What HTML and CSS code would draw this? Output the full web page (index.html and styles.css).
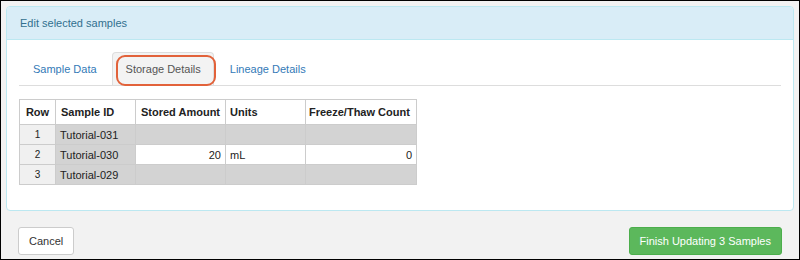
FILE: index.html
```html
<!DOCTYPE html>
<html lang="en">
<head>
    <meta charset="UTF-8">
    <title>Edit selected samples</title>
    <link rel="stylesheet" href="styles.css">
</head>
<body>
    <div class="frame">
        <div class="panel">
            <div class="panel-heading">Edit selected samples</div>
            <div class="panel-body">
                <ul class="tabs">
                    <li class="tab"><a href="#">Sample Data</a></li>
                    <li class="tab active"><a href="#">Storage Details</a></li>
                    <li class="tab"><a href="#">Lineage Details</a></li>
                </ul>

                <table class="grid">
                    <thead>
                        <tr>
                            <th class="col-row">Row</th>
                            <th class="col-id">Sample ID</th>
                            <th class="col-amount">Stored Amount</th>
                            <th class="col-units">Units</th>
                            <th class="col-count">Freeze/Thaw Count</th>
                        </tr>
                    </thead>
                    <tbody>
                        <tr>
                            <td class="row-num">1</td>
                            <td class="locked">Tutorial-031</td>
                            <td class="locked"></td>
                            <td class="locked"></td>
                            <td class="locked"></td>
                        </tr>
                        <tr>
                            <td class="row-num">2</td>
                            <td class="locked">Tutorial-030</td>
                            <td class="num">20</td>
                            <td>mL</td>
                            <td class="num">0</td>
                        </tr>
                        <tr>
                            <td class="row-num">3</td>
                            <td class="locked">Tutorial-029</td>
                            <td class="locked"></td>
                            <td class="locked"></td>
                            <td class="locked"></td>
                        </tr>
                    </tbody>
                </table>
            </div>
        </div>

        <div class="footer">
            <button class="btn">Cancel</button>
            <button class="btn btn-success">Finish Updating 3 Samples</button>
        </div>
    </div>
</body>
</html>
```

FILE: styles.css
```css
* {
    box-sizing: border-box;
}

body {
    margin: 0;
    font-family: "Liberation Sans", Arial, sans-serif;
    font-size: 11px;
    color: #333;
}

.frame {
    width: 800px;
    height: 260px;
    border: 1px solid #000;
    background: #f2f2f2;
    padding: 5px 5px 0 5px;
}

.panel {
    background: #fff;
    border: 1px solid #bce8f1;
    border-radius: 4px;
    margin-bottom: 16px;
}

.panel-heading {
    height: 33px;
    line-height: 32px;
    padding: 0 13px;
    background: #d9edf7;
    color: #31708f;
    border-bottom: 1px solid #bce8f1;
    border-radius: 3px 3px 0 0;
}

.panel-body {
    padding: 12px 12px 25px;
}

/* tabs */
.tabs {
    display: flex;
    list-style: none;
    margin: 0 0 13px;
    padding: 0;
    border-bottom: 1px solid #ddd;
}

.tab {
    position: relative;
    margin-right: 2px;
}

.tab a {
    display: block;
    line-height: 32px;
    padding: 0 12px 0 13px;
    border: 1px solid transparent;
    border-bottom: none;
    border-radius: 4px 4px 0 0;
    color: #337ab7;
    text-decoration: none;
}

.tab.active a {
    background: #f3f3f3;
    border-color: #ddd;
    color: #555;
}

/* orange callout drawn round the active tab */
.tab.active::after {
    content: "";
    position: absolute;
    left: 4px;
    top: 3px;
    width: 96px;
    height: 27px;
    border: 2px solid #e2623a;
    border-radius: 9px;
    pointer-events: none;
}

/* grid */
.grid {
    table-layout: fixed;
    width: 398px;
    border-collapse: separate;
    border-spacing: 0;
}

.grid th,
.grid td {
    border-right: 1px solid #ccc;
    border-bottom: 1px solid #ccc;
    padding: 0 4px;
    text-align: left;
    white-space: nowrap;
    overflow: hidden;
}

.grid th {
    height: 26px;
    border-top: 1px solid #ccc;
    font-weight: bold;
    background: #fff;
    color: #222;
}

.grid td {
    height: 20px;
    color: #222;
}

.grid .col-row { width: 37px; border-left: 1px solid #ccc; text-align: center; padding: 0; }
.grid .col-id { width: 80px; padding-left: 5px; }
.grid .col-amount { width: 90px; padding-left: 5px; }
.grid .col-units { width: 80px; }
.grid .col-count { width: 111px; padding-left: 3px; }

.grid .row-num {
    border-left: 1px solid #ccc;
    background: #f0f0f0;
    text-align: center;
    padding: 0;
    font-size: 10px;
}

.grid .locked {
    background: #d3d3d3;
}

.grid .num {
    text-align: right;
}

/* footer buttons */
.footer {
    display: flex;
    justify-content: space-between;
    padding: 0 12px;
}

.btn {
    height: 28px;
    padding: 0 10px;
    font-family: inherit;
    font-size: 11px;
    line-height: 26px;
    color: #333;
    background: #fff;
    border: 1px solid #ccc;
    border-radius: 3px;
    cursor: pointer;
}

.btn-success {
    color: #fff;
    background: #5cb85c;
    border-color: #4cae4c;
}
```
